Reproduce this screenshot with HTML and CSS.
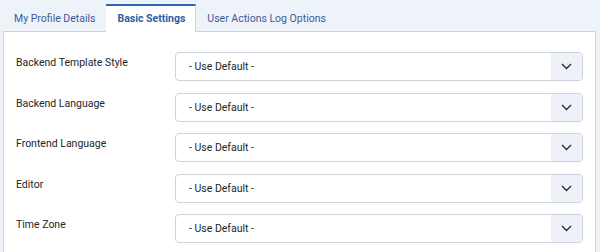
FILE: index.html
```html
<!DOCTYPE html>
<html lang="en">

<head>
    <meta charset="UTF-8">
    <meta name="viewport" content="width=device-width, initial-scale=1.0">
    <title>Edit Profile</title>
    <link rel="stylesheet" href="styles.css">
</head>

<body>
    <div class="tabs">
        <ul class="tab-list">
            <li class="tab">My Profile Details</li>
            <li class="tab active">Basic Settings</li>
            <li class="tab">User Actions Log Options</li>
        </ul>
        <div class="tab-panel">
            <div class="field">
                <label>Backend Template Style</label>
                <div class="select">
                    <span class="value">- Use Default -</span>
                    <span class="arrow"><svg width="11" height="7" viewBox="0 0 11 7"><path d="M1 1 5.5 5.5 10 1" fill="none" stroke="#22262a" stroke-width="1.3"/></svg></span>
                </div>
            </div>
            <div class="field">
                <label>Backend Language</label>
                <div class="select">
                    <span class="value">- Use Default -</span>
                    <span class="arrow"><svg width="11" height="7" viewBox="0 0 11 7"><path d="M1 1 5.5 5.5 10 1" fill="none" stroke="#22262a" stroke-width="1.3"/></svg></span>
                </div>
            </div>
            <div class="field">
                <label>Frontend Language</label>
                <div class="select">
                    <span class="value">- Use Default -</span>
                    <span class="arrow"><svg width="11" height="7" viewBox="0 0 11 7"><path d="M1 1 5.5 5.5 10 1" fill="none" stroke="#22262a" stroke-width="1.3"/></svg></span>
                </div>
            </div>
            <div class="field">
                <label>Editor</label>
                <div class="select">
                    <span class="value">- Use Default -</span>
                    <span class="arrow"><svg width="11" height="7" viewBox="0 0 11 7"><path d="M1 1 5.5 5.5 10 1" fill="none" stroke="#22262a" stroke-width="1.3"/></svg></span>
                </div>
            </div>
            <div class="field">
                <label>Time Zone</label>
                <div class="select">
                    <span class="value">- Use Default -</span>
                    <span class="arrow"><svg width="11" height="7" viewBox="0 0 11 7"><path d="M1 1 5.5 5.5 10 1" fill="none" stroke="#22262a" stroke-width="1.3"/></svg></span>
                </div>
            </div>
        </div>
    </div>
</body>

</html>
```

FILE: styles.css
```css
* {
    margin: 0;
    padding: 0;
    box-sizing: border-box;
    font-family: Roboto, "Liberation Sans", sans-serif;
}

body {
    background-color: #eef3fa;
    height: 252px;
    overflow: hidden;
}

.tabs {
    padding: 4px 4px 0 3px;
}

.tab-list {
    list-style: none;
    display: flex;
    height: 27px;
}

.tab {
    font-size: 10.5px;
    color: #3b5b97;
    padding: 0 11px;
    line-height: 25px;
    border-top: 2px solid transparent;
}

.tab.active {
    background-color: #fff;
    border-top-color: #2a69b8;
    border-right: 1px solid #c9d4e3;
    font-weight: bold;
    color: #2a62a8;
    height: 28px;
    position: relative;
    z-index: 1;
    padding: 0 10px 0 11px;
}

.tab-panel {
    background-color: #fff;
    border: 1px solid #c9d4e3;
    border-bottom: none;
    padding: 20px 12px 0 12px;
    height: 230px;
}

.field {
    display: grid;
    grid-template-columns: 159px 1fr;
    margin-bottom: 11.5px;
}

.field label {
    font-size: 10.5px;
    color: #22262a;
    line-height: 14px;
    padding-top: 4px;
}

.select {
    display: flex;
    height: 29px;
    border: 1px solid #ccd3dc;
    border-radius: 4px;
    overflow: hidden;
}

.value {
    flex: 1;
    font-size: 10.5px;
    color: #22262a;
    line-height: 27px;
    padding-left: 13px;
}

.arrow {
    width: 31px;
    background-color: #eef2f8;
    display: flex;
    align-items: center;
    justify-content: center;
}
```
